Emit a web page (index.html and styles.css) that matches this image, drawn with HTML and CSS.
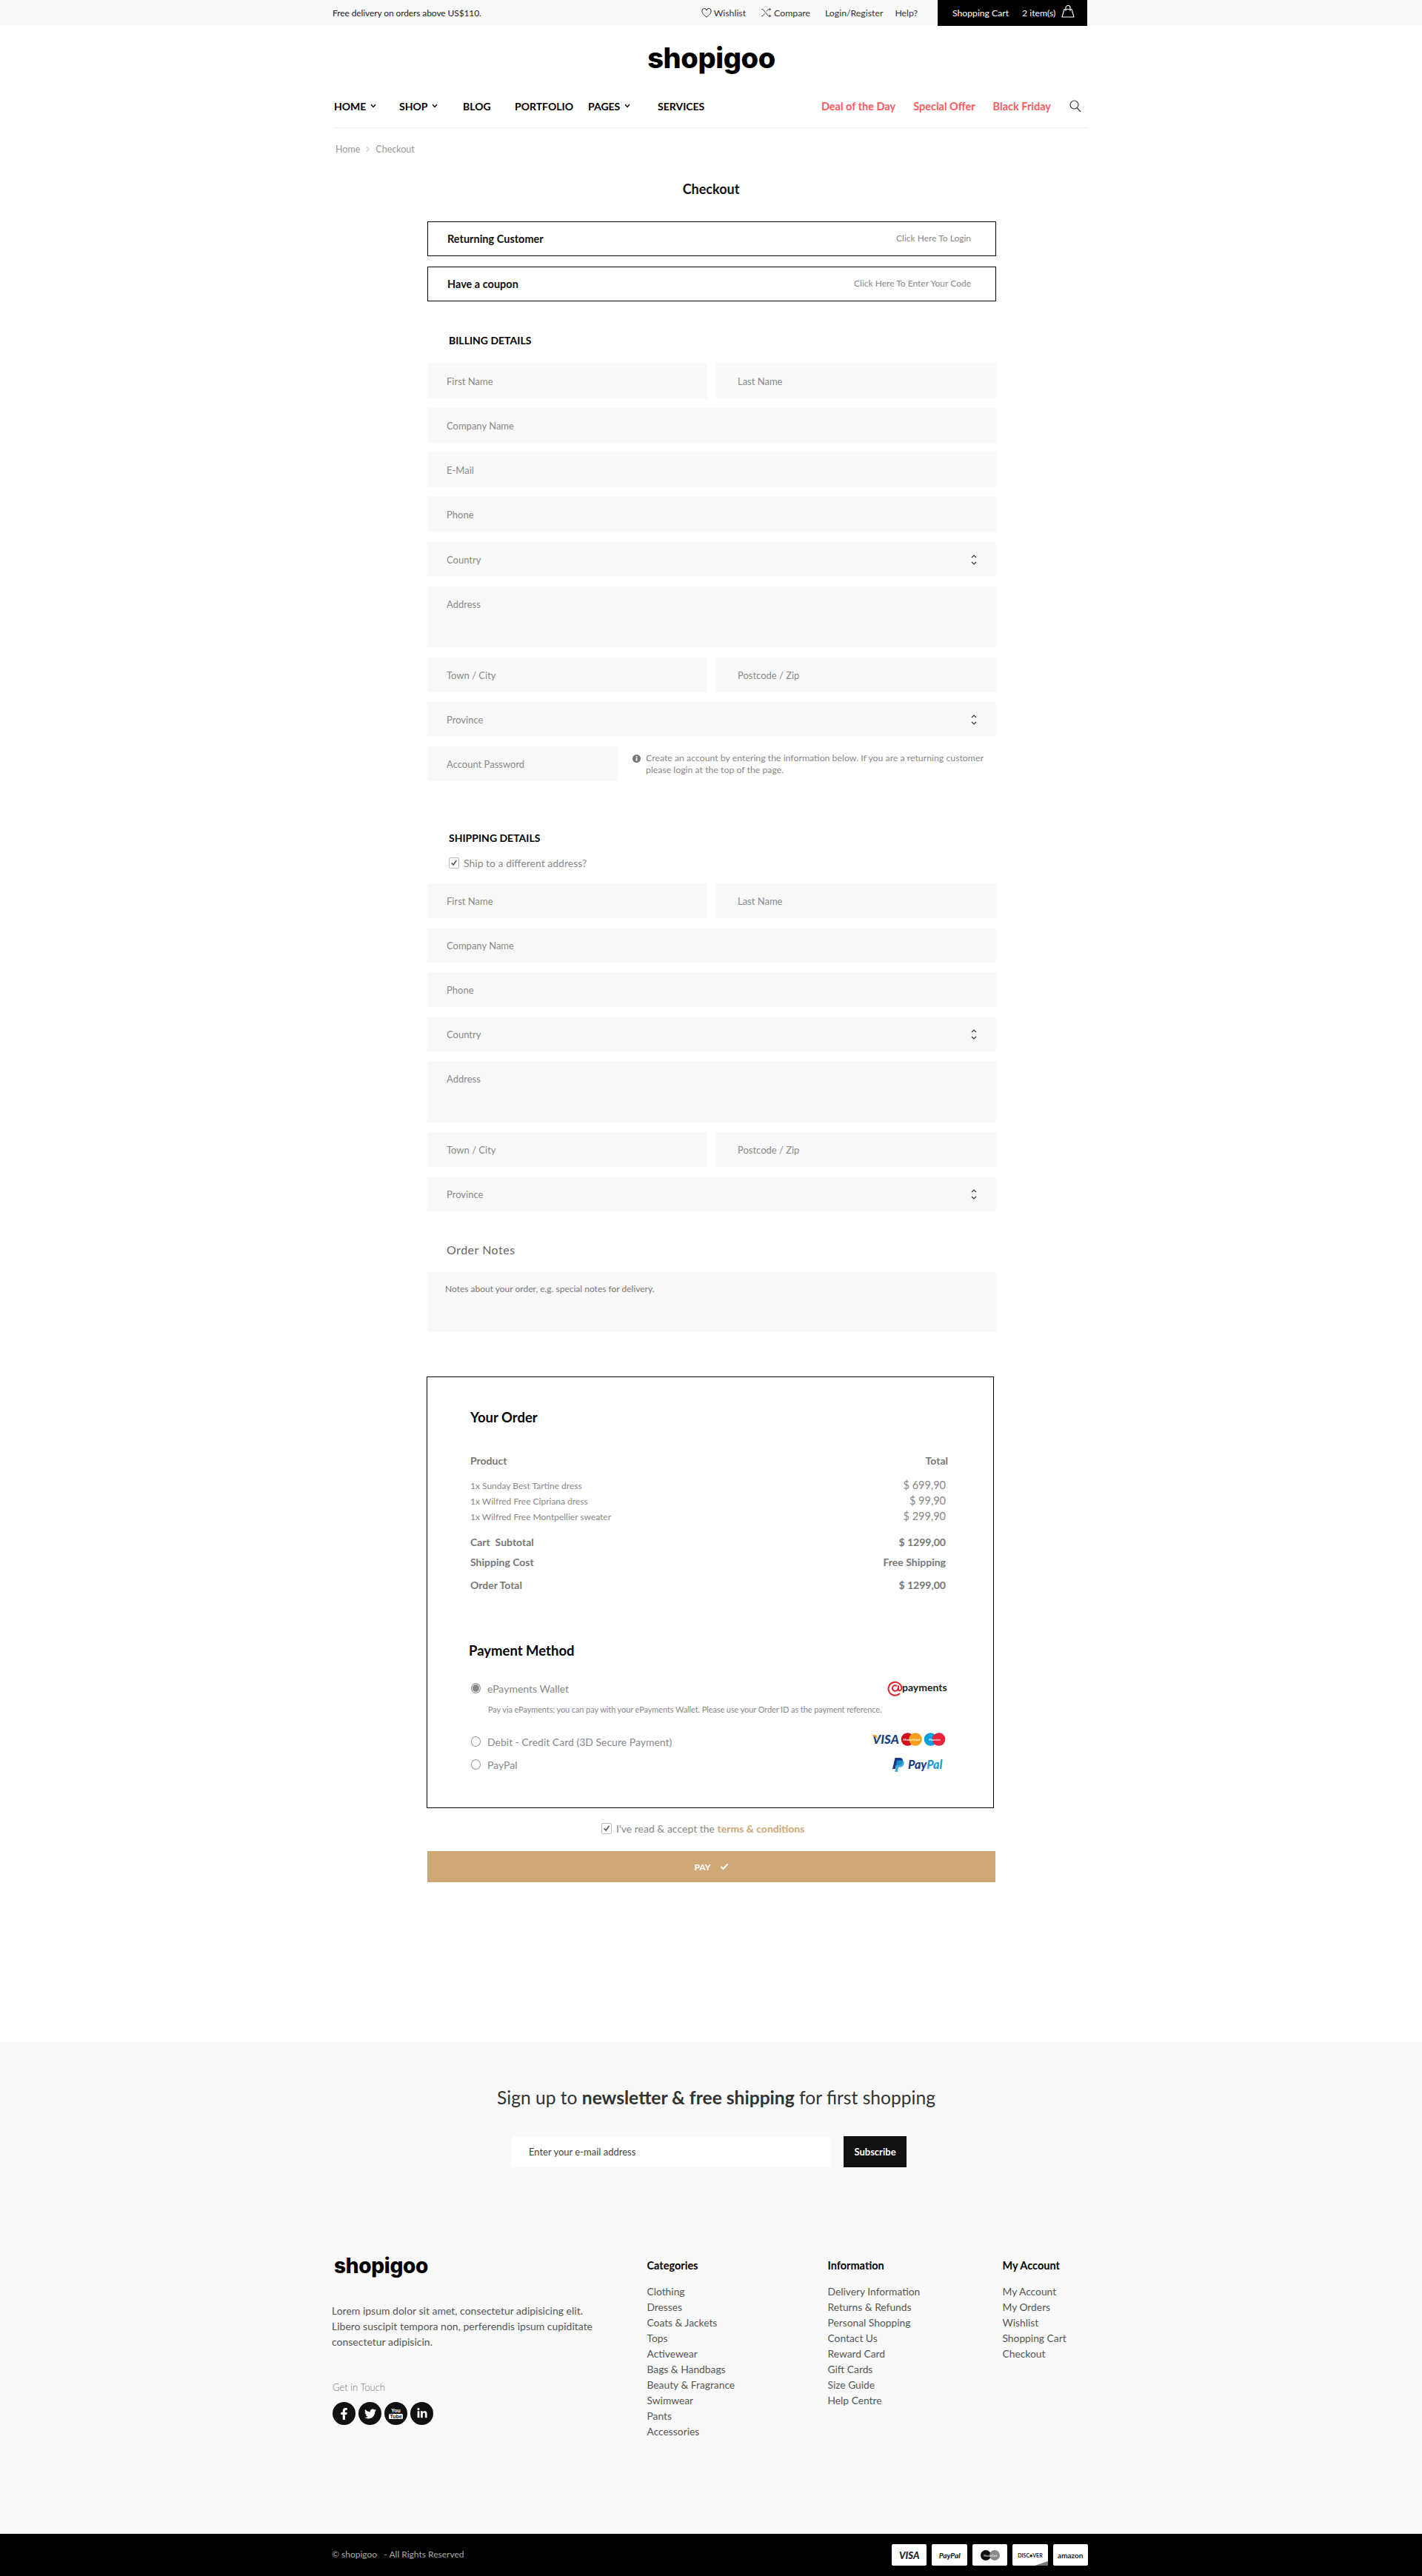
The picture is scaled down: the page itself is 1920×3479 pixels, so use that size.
FILE: index.html
```html
<!DOCTYPE html>
<html lang="en">
<head>
<meta charset="utf-8">
<title>Checkout - shopigoo</title>
<link rel="stylesheet" href="styles.css">
</head>
<body>
<div class="topbar">
  <div class="wrap topbar-in">
    <span class="promo">Free delivery on orders above US$110.</span>
    <div class="top-links">
      <a class="top-link"><svg class="ic-heart" viewBox="0 0 16 15"><path d="M8 14C3 10 1 7.500 1 4.800A3.500 3.500 0 0 1 8 3.500 3.500 3.500 0 0 1 15 4.800C15 7.500 13 10 8 14z"/></svg>Wishlist</a>
      <a class="top-link"><svg class="ic-shuffle" viewBox="0 0 18 16"><path d="M1 2h2.500l9 11H16M1 13h2.500l3-4M9.500 5.500 12.500 2H16M14 0l2.500 2L14 4M14 11l2.500 2-2.500 2"/></svg>Compare</a>
      <a class="top-link">Login/Register</a>
      <a class="top-link help">Help?</a>
    </div>
    <div class="cart">
      <span>Shopping Cart</span>
      <span>2 item(s)</span>
      <svg class="ic-bag" viewBox="0 0 18 17"><path d="M4 5.500h10l3 10.500H1zM6 8V3.500a3 3 0 0 1 6 0V8"/></svg>
    </div>
  </div>
</div>

<header class="wrap">
  <div class="logo-row"><span class="logo">shopigoo</span></div>
  <nav class="nav">
    <div class="nav-main">
      <a>HOME<svg class="ic-chev" viewBox="0 0 8 6"><path d="M1 1l3 3.500L7 1"/></svg></a>
      <a>SHOP<svg class="ic-chev" viewBox="0 0 8 6"><path d="M1 1l3 3.500L7 1"/></svg></a>
      <a>BLOG</a>
      <a>PORTFOLIO</a>
      <a>PAGES<svg class="ic-chev" viewBox="0 0 8 6"><path d="M1 1l3 3.500L7 1"/></svg></a>
      <a>SERVICES</a>
    </div>
    <div class="nav-promo">
      <a>Deal of the Day</a>
      <a>Special Offer</a>
      <a>Black Friday</a>
      <svg class="ic-search" viewBox="0 0 17 16"><circle cx="6.500" cy="6.500" r="5.500"/><path d="M10.500 11 15 16"/></svg>
    </div>
  </nav>
  <div class="crumbs"><span>Home</span><svg class="ic-crumb" viewBox="0 0 6 10"><path d="M1 1l4 4-4 4"/></svg><span>Checkout</span></div>
</header>

<main class="wrap">
  <h1 class="page-title">Checkout</h1>
  <div class="checkout">
    <div class="toggle"><strong>Returning Customer</strong><span>Click Here To Login</span></div>
    <div class="toggle"><strong>Have a coupon</strong><span>Click Here To Enter Your Code</span></div>

    <h2 class="section-title billing-title">BILLING DETAILS</h2>
    <div class="stack">
      <div class="row"><div class="field">First Name</div><div class="field">Last Name</div></div>
      <div class="field">Company Name</div>
      <div class="field">E-Mail</div>
      <div class="field">Phone</div>
      <div class="field select shift">Country<svg class="ic-updown" viewBox="0 0 8 16"><path d="M1 5l3-3 3 3M1 11l3 3 3-3"/></svg></div>
      <div class="field area">Address</div>
      <div class="row"><div class="field">Town / City</div><div class="field">Postcode / Zip</div></div>
      <div class="field select">Province<svg class="ic-updown" viewBox="0 0 8 16"><path d="M1 5l3-3 3 3M1 11l3 3 3-3"/></svg></div>
      <div class="row pass-row">
        <div class="field pass">Account Password</div>
        <div class="pass-note">
          <svg class="ic-info" viewBox="0 0 12 12"><circle cx="6" cy="6" r="6"/><rect class="cut" x="5" y="5" width="2" height="4.500"/><rect class="cut" x="5" y="2.500" width="2" height="1.600"/></svg>
          <p>Create an account by entering the information below. If you are a returning customer please login at the top of the page.</p>
        </div>
      </div>
    </div>

    <h2 class="section-title shipping-title">SHIPPING DETAILS</h2>
    <label class="check-row ship-check"><span class="checkbox"><svg viewBox="0 0 12 12"><path d="M2 6.500 5 9.500 10 2.500"/></svg></span>Ship to a different address?</label>
    <div class="stack">
      <div class="row"><div class="field">First Name</div><div class="field">Last Name</div></div>
      <div class="field">Company Name</div>
      <div class="field">Phone</div>
      <div class="field select">Country<svg class="ic-updown" viewBox="0 0 8 16"><path d="M1 5l3-3 3 3M1 11l3 3 3-3"/></svg></div>
      <div class="field area">Address</div>
      <div class="row"><div class="field">Town / City</div><div class="field">Postcode / Zip</div></div>
      <div class="field select">Province<svg class="ic-updown" viewBox="0 0 8 16"><path d="M1 5l3-3 3 3M1 11l3 3 3-3"/></svg></div>
    </div>

    <h3 class="notes-title">Order Notes</h3>
    <div class="notes">Notes about your order, e.g. special notes for delivery.</div>

    <section class="order">
      <h2 class="order-title">Your Order</h2>
      <div class="line head"><span>Product</span><span>Total</span></div>
      <div class="items">
        <div class="line item"><span>1x Sunday Best Tartine dress</span><b>$ 699,90</b></div>
        <div class="line item"><span>1x Wilfred Free Cipriana dress</span><b>$ 99,90</b></div>
        <div class="line item"><span>1x Wilfred Free Montpellier sweater</span><b>$ 299,90</b></div>
      </div>
      <div class="line total subtotal"><span>Cart&nbsp; Subtotal</span><span>$ 1299,00</span></div>
      <div class="line total shipcost"><span>Shipping Cost</span><span>Free Shipping</span></div>
      <div class="line total grand"><span>Order Total</span><span>$ 1299,00</span></div>

      <h2 class="pay-title">Payment Method</h2>
      <div class="pay-option first">
        <span class="radio on"></span><span class="pay-label">ePayments Wallet</span>
        <svg class="logo-ep" viewBox="0 0 78 22"><path d="M16 18A9 9 0 1 1 18.500 11c0 3-3 4-4.500 2.500V7.500M13.500 11a3.800 3.800 0 1 1-1.500-3" fill="none" stroke="#e0232e" stroke-width="2"/><text x="19" y="15" class="ep-text">payments</text></svg>
      </div>
      <p class="pay-desc">Pay via ePayments; you can pay with your ePayments Wallet. Please use your Order ID as the payment reference.</p>
      <div class="pay-option debit">
        <span class="radio"></span><span class="pay-label">Debit - Credit Card (3D Secure Payment)</span>
        <svg class="logo-cards" viewBox="0 0 100 18"><text x="1" y="15" class="visa-text">VISA</text><path d="M0 3h6l2 5z" fill="#f5a623"/><circle cx="48.500" cy="9" r="8.800" fill="#d0101e"/><circle cx="59" cy="9" r="8.800" fill="#f79e1b"/><text x="53.750" y="11" class="mc-text">MasterCard</text><circle cx="79.500" cy="9" r="8.800" fill="#0a9edc"/><circle cx="90.500" cy="9" r="8.800" fill="#e8233c"/><text x="85" y="11" class="mc-text">Maestro</text></svg>
      </div>
      <div class="pay-option paypal">
        <span class="radio"></span><span class="pay-label">PayPal</span>
        <svg class="logo-pp" viewBox="0 0 72 19"><path d="M3.500 0h6c3.500 0 5 2 4.300 5-.8 3.500-3.300 5-6.300 5H5L3.800 15H0z" fill="#1a3a8a"/><path d="M6 3.500h6c3 0 4.200 1.700 3.600 4.500-.8 3.200-3 4.700-5.800 4.700H8L7 19H3.400z" fill="#1d9ad6" opacity=".85"/><text x="21" y="15" class="pp-text">Pay<tspan class="pp-light">Pal</tspan></text></svg>
      </div>
    </section>

    <label class="check-row accept"><span class="checkbox"><svg viewBox="0 0 12 12"><path d="M2 6.500 5 9.500 10 2.500"/></svg></span>I've read &amp; accept the&nbsp;<a class="terms">terms &amp; conditions</a></label>
    <button class="pay-btn">PAY<svg class="ic-paycheck" viewBox="0 0 12 10"><path d="M1.500 5 4.500 8 10.500 1.500"/></svg></button>
  </div>
</main>

<footer class="footer">
  <div class="wrap">
    <h2 class="news-title">Sign up to <b>newsletter &amp; free shipping</b> for first shopping</h2>
    <div class="news-form">
      <div class="news-input">Enter your e-mail address</div>
      <button class="news-btn">Subscribe</button>
    </div>
    <div class="foot-grid">
      <div class="foot-about">
        <div class="logo logo-small">shopigoo</div>
        <p class="about-text">Lorem ipsum dolor sit amet, consectetur adipisicing elit. Libero suscipit tempora non, perferendis ipsum cupiditate consectetur adipisicin.</p>
        <div class="touch">Get in Touch</div>
        <div class="socials">
          <a class="social"><svg class="s-fb" viewBox="0 0 320 512"><path d="M279.140 288l14.220-92.660h-88.910v-60.130c0-25.350 12.420-50.060 52.240-50.060h40.420V6.260S260.430 0 225.360 0c-73.220 0-121.080 44.380-121.080 124.720v70.620H22.890V288h81.390v224h100.170V288z"/></svg></a>
          <a class="social"><svg class="s-tw" viewBox="0 0 512 512"><path d="M459.370 151.716c.325 4.548.325 9.097.325 13.645 0 138.720-105.583 298.558-298.558 298.558-59.452 0-114.680-17.219-161.137-47.106 8.447.974 16.568 1.299 25.340 1.299 49.055 0 94.213-16.568 130.274-44.832-46.132-.975-84.792-31.188-98.112-72.772 6.498.974 12.995 1.624 19.818 1.624 9.421 0 18.843-1.300 27.614-3.573-48.081-9.747-84.143-51.980-84.143-102.985v-1.299c13.969 7.797 30.214 12.670 47.431 13.319-28.264-18.843-46.781-51.005-46.781-87.391 0-19.492 5.197-37.360 14.294-52.954 51.655 63.675 129.300 105.258 216.365 109.807-1.624-7.797-2.599-15.918-2.599-24.040 0-57.828 46.782-104.934 104.934-104.934 30.213 0 57.502 12.670 76.670 33.137 23.715-4.548 46.456-13.320 66.599-25.340-7.798 24.366-24.366 44.833-46.132 57.827 21.117-2.273 41.584-8.122 60.426-16.243-14.292 20.791-32.161 39.308-52.628 54.253z"/></svg></a>
          <a class="social yt"><span class="yt-you">You</span><span class="yt-tube">Tube</span></a>
          <a class="social"><svg class="s-in" viewBox="0 0 448 512"><path d="M100.280 448H7.400V148.900h92.880zM53.790 108.100C24.090 108.100 0 83.500 0 53.800a53.790 53.790 0 0 1 107.580 0c0 29.700-24.100 54.300-53.790 54.300zM447.900 448h-92.680V302.400c0-34.700-.7-79.200-48.290-79.200-48.290 0-55.690 37.700-55.690 76.700V448h-92.780V148.900h89.080v40.800h1.300c12.400-23.500 42.690-48.300 87.880-48.300 94 0 111.280 61.900 111.280 142.300V448z"/></svg></a>
        </div>
      </div>
      <div class="foot-col">
        <h4>Categories</h4>
        <a>Clothing</a><a>Dresses</a><a>Coats &amp; Jackets</a><a>Tops</a><a>Activewear</a><a>Bags &amp; Handbags</a><a>Beauty &amp; Fragrance</a><a>Swimwear</a><a>Pants</a><a>Accessories</a>
      </div>
      <div class="foot-col">
        <h4>Information</h4>
        <a>Delivery Information</a><a>Returns &amp; Refunds</a><a>Personal Shopping</a><a>Contact Us</a><a>Reward Card</a><a>Gift Cards</a><a>Size Guide</a><a>Help Centre</a>
      </div>
      <div class="foot-col">
        <h4>My Account</h4>
        <a>My Account</a><a>My Orders</a><a>Wishlist</a><a>Shopping Cart</a><a>Checkout</a>
      </div>
    </div>
  </div>
</footer>

<div class="bottom">
  <div class="wrap bottom-in">
    <span class="copy">© shopigoo &nbsp; - All Rights Reserved</span>
    <div class="cards">
      <div class="card"><span class="c-visa">VISA</span></div>
      <div class="card"><span class="c-pp">PayPal</span></div>
      <div class="card"><svg class="c-mc" viewBox="0 0 26 14"><circle cx="7" cy="7" r="7" fill="#111"/><circle cx="19" cy="7" r="7" fill="#8a8a8a"/><text x="13" y="8.500" class="c-mc-text">MasterCard</text></svg></div>
      <div class="card discover"><span class="c-disc">DISC&#9679;VER</span></div>
      <div class="card"><span class="c-amz">amazon</span></div>
    </div>
  </div>
</div>
</body>
</html>
```

FILE: styles.css
```css
* { box-sizing: border-box; }
html, body { margin: 0; padding: 0; }
body {
  font-family: Lato, "Noto Sans", sans-serif;
  font-size: 13px;
  color: #888;
  background: #fff;
}
a { color: inherit; text-decoration: none; }
h1, h2, h3, h4, p { margin: 0; }
svg { display: block; flex: none; }
.wrap { width: 1020px; margin-left: 450px; }

/* top bar */
.topbar { background: #f9f9f9; height: 35px; }
.topbar-in { display: flex; align-items: center; height: 35px; color: #222; font-size: 12px; }
.promo { margin-left: -1px; letter-spacing: -.1px; }
.top-links { display: flex; align-items: center; margin-left: auto; gap: 20px; color: #333; font-size: 12.300px; }
.top-link { display: flex; align-items: center; gap: 3px; }
.help { margin-left: -4px; }
.ic-heart { width: 14px; height: 13px; fill: none; stroke: #222; stroke-width: 1.1; }
.ic-shuffle { width: 15px; height: 13px; fill: none; stroke: #222; stroke-width: 1; }
.cart { display: flex; align-items: center; width: 202px; height: 35px; margin-left: 27px; margin-right: 2px; padding-left: 20px; gap: 18px; background: #000; color: #fff; font-size: 12.200px; }
.ic-bag { width: 18px; height: 17px; margin-left: -10px; margin-top: -5px; fill: none; stroke: #fff; stroke-width: 1.1; stroke-linejoin: round; }

/* header */
.logo-row { display: flex; justify-content: center; align-items: center; height: 86px; padding-left: 1px; }
.logo { font-family: Inter, "Open Sans", sans-serif; font-weight: 800; font-size: 38px; line-height: 40px; color: #000; letter-spacing: -.4px; }
.nav { display: flex; align-items: center; justify-content: space-between; padding-bottom: 7px; border-bottom: 1px solid #eee; font-size: 14px; box-sizing: content-box; height: 44px; }
.nav-main { display: grid; grid-template-columns: 88px 86px 70px 99px 94px auto; padding-left: 1px; color: #000; font-weight: 700; }
.nav-main a { display: flex; align-items: center; gap: 6px; }
.ic-chev { width: 8px; height: 6px; fill: none; stroke: #000; stroke-width: 1.2; }
.nav-promo { display: flex; align-items: center; gap: 24px; padding-right: 9px; color: #ff5a5f; font-weight: 700; font-size: 14.500px; }
.ic-search { width: 17px; height: 16px; margin-left: 1px; fill: none; stroke: #333; stroke-width: 1.200; }
.crumbs { display: flex; align-items: center; height: 56px; padding-left: 3px; gap: 8px; color: #999; font-size: 12.500px; }
.ic-crumb { width: 5px; height: 9px; fill: none; stroke: #999; stroke-width: 1; }

/* main */
.page-title { height: 24px; margin-top: 14px; text-align: center; font-size: 18px; line-height: 24px; font-weight: 700; color: #111; }
.checkout { width: 768px; margin-left: 127px; padding-top: 32px; padding-bottom: 215px; }
.toggle { display: flex; align-items: center; justify-content: space-between; height: 47px; margin-bottom: 14px; padding: 0 33px 0 26px; border: 1px solid #000; font-size: 12px; color: #888; }
.toggle strong { color: #111; font-size: 14.500px; font-weight: 700; }
.toggle span { margin-top: -3px; }
.section-title { height: 20px; padding-left: 29px; font-size: 14px; line-height: 20px; font-weight: 700; color: #000; }
.billing-title { margin-top: 43px; margin-bottom: 21px; }
.shipping-title { margin-top: 67px; margin-bottom: 13px; }
.stack { display: flex; flex-direction: column; gap: 13px; }
.row { display: flex; gap: 12px; }
.row .field { flex: 1 1 50%; }
.row .field + .field { padding-left: 29px; }
.field { display: flex; align-items: center; justify-content: space-between; height: 47px; padding: 0 26px; background: #f9f9f9; font-size: 13px; color: #888; }
.shift { margin-top: 1px; }
.ic-updown { width: 8px; height: 16px; fill: none; stroke: #333; stroke-width: 1.2; }
.area { align-items: flex-start; height: 83px; padding-top: 16px; }
.pass-row { gap: 20px; }
.row .pass { flex: none; width: 257px; }
.pass-note { display: flex; flex: 1; gap: 7px; padding-top: 8px; font-size: 12.300px; line-height: 16px; color: #888; }
.ic-info { width: 11px; height: 11px; margin-top: 3px; fill: #777; }
.ic-info .cut { fill: #fff; }
.check-row { display: flex; align-items: center; font-size: 14px; color: #888; }
.ship-check { height: 20px; margin-bottom: 18px; padding-left: 29px; gap: 6px; }
.checkbox { display: flex; align-items: center; justify-content: center; width: 14px; height: 15px; border: 1px solid #bbb; border-radius: 2px; background: #fff; }
.checkbox svg { width: 10px; height: 10px; fill: none; stroke: #555; stroke-width: 2; }
.notes-title { height: 20px; margin-top: 42px; margin-bottom: 19px; padding-left: 26px; font-size: 16px; line-height: 20px; font-weight: 400; color: #666; letter-spacing: .5px; }
.notes { height: 82px; padding: 16px 24px; background: #f9f9f9; font-size: 12px; line-height: 16px; color: #777; }

/* order box */
.order { width: 766px; height: 583px; margin-top: 60px; margin-left: -1px; padding: 42px 61px 0 58px; border: 1px solid #000; }
.order-title { height: 24px; font-size: 18.500px; line-height: 24px; font-weight: 700; color: #000; }
.line { display: flex; justify-content: space-between; }
.head { height: 20px; margin-top: 37px; font-size: 14px; line-height: 20px; font-weight: 700; color: #777; }
.items { margin-top: 13px; }
.item { height: 21px; align-items: center; font-size: 12px; color: #888; padding-right: 3px; }
.item b { font-size: 14.500px; font-weight: 400; margin-top: -2px; }
.total { height: 20px; padding-right: 3px; font-size: 14px; line-height: 20px; font-weight: 700; color: #777; }
.subtotal { margin-top: 14px; }
.shipcost { margin-top: 7px; }
.grand { margin-top: 11px; }
.pay-title { height: 24px; margin-top: 66px; margin-left: -2px; font-size: 18.500px; line-height: 24px; font-weight: 700; color: #000; }
.pay-option { display: flex; align-items: center; height: 20px; padding-left: 1px; padding-right: 3px; font-size: 14px; color: #888; }
.pay-label { margin-left: 9px; margin-right: auto; }
.first { margin-top: 29px; }
.debit { margin-top: 25px; }
.paypal { margin-top: 11px; }
.radio { width: 13px; height: 14px; border: 1px solid #999; border-radius: 50%; background: #fff; }
.radio.on { background: #888; box-shadow: inset 0 0 0 1px #fff; }
.pay-desc { height: 16px; margin-top: 11px; margin-left: 24px; font-size: 11px; line-height: 16px; letter-spacing: -.1px; color: #888; white-space: nowrap; }
.logo-ep { width: 78px; height: 22px; overflow: visible; }
.ep-text { font-family: Lato, sans-serif; font-size: 14px; font-weight: 700; fill: #222; }
.logo-cards { width: 100px; height: 18px; overflow: visible; margin-top: -6px; }
.visa-text { font-family: Lato, sans-serif; font-size: 17px; font-weight: 900; font-style: italic; fill: #1a3f7a; }
.mc-text { font-family: Lato, sans-serif; font-size: 4.500px; font-weight: 700; font-style: italic; fill: #fff; text-anchor: middle; }
.logo-pp { width: 72px; height: 19px; overflow: visible; }
.pp-text { font-family: Lato, sans-serif; font-size: 16px; font-weight: 900; font-style: italic; fill: #1a3a8a; }
.pp-light { fill: #1d9ad6; }
.accept { height: 16px; margin-top: 19px; margin-left: 235px; gap: 0; white-space: nowrap; }
.accept .checkbox { margin-right: 6px; }
.terms { font-weight: 700; color: #cfa777; }
.pay-btn { display: flex; align-items: center; justify-content: center; gap: 12px; width: 767px; height: 42px; margin-top: 23px; border: 0; background: #cfa878; color: #fff; font-family: inherit; font-size: 12px; font-weight: 700; }
.ic-paycheck { width: 12px; height: 10px; fill: none; stroke: #fff; stroke-width: 2; }

/* footer */
.footer { background: #f9f9f9; padding-top: 60px; padding-bottom: 128px; }
.news-title { height: 32px; padding-left: 14px; text-align: center; font-size: 24.600px; line-height: 32px; font-weight: 400; color: #333; }
.news-title b { font-weight: 700; }
.news-form { display: flex; gap: 18px; margin-top: 36px; margin-left: 240px; }
.news-input { display: flex; align-items: center; width: 431px; height: 42px; padding-left: 24px; background: #fff; font-size: 13px; color: #444; }
.news-btn { width: 85px; height: 42px; border: 0; background: #111; color: #fff; font-family: inherit; font-size: 13px; font-weight: 700; }
.foot-grid { display: grid; grid-template-columns: 424px 244px 236px 1fr; margin-top: 123px; }
.logo-small { height: 20px; font-size: 28px; line-height: 20px; letter-spacing: -.3px; padding-left: 1px; }
.about-text { width: 370px; margin-top: 40px; margin-left: -2px; font-size: 14px; line-height: 21px; color: #555; }
.touch { height: 20px; margin-top: 41px; margin-left: -1px; font-size: 13px; line-height: 20px; font-weight: 300; color: #777; }
.socials { display: flex; gap: 4px; margin-top: 10px; margin-left: -1px; }
.social { display: flex; align-items: center; justify-content: center; width: 31px; height: 31px; border-radius: 50%; background: #111; }
.social svg { fill: #fff; }
.s-fb { width: 11px; height: 16px; }
.s-tw { width: 16px; height: 16px; }
.s-in { width: 14px; height: 15px; }
.yt { flex-direction: column; color: #fff; font-family: "Liberation Sans", sans-serif; font-size: 7px; line-height: 7px; font-weight: 700; }
.yt-tube { background: #fff; color: #111; border-radius: 1.500px; padding: 0 1px; margin-top: 1px; }
.foot-col { display: flex; flex-direction: column; }
.foot-col h4 { height: 20px; margin-bottom: 14px; margin-left: -.5px; font-size: 14.500px; line-height: 20px; font-weight: 700; color: #000; }
.foot-col a { height: 21px; margin-left: -.5px; font-size: 13.800px; line-height: 21px; color: #555; }

/* bottom */
.bottom { background: #000; height: 57px; }
.bottom-in { display: flex; align-items: center; justify-content: space-between; height: 57px; padding-bottom: 2px; }
.copy { margin-left: -2px; font-size: 12px; color: #aaa; }
.cards { display: flex; gap: 7px; margin-top: 2px; margin-right: 1px; }
.card { position: relative; display: flex; align-items: center; justify-content: center; width: 47.400px; height: 29px; background: #fff; border-radius: 2px; color: #222; overflow: hidden; }
.c-visa { font-size: 13px; font-weight: 900; font-style: italic; }
.c-pp { font-size: 10px; font-weight: 900; font-style: italic; }
.c-mc { width: 26px; height: 14px; }
.c-mc-text { font-family: Lato, sans-serif; font-size: 3.500px; fill: #fff; text-anchor: middle; }
.c-disc { font-size: 7px; font-weight: 700; }
.discover::after { content: ""; position: absolute; right: 0; bottom: 0; border-style: solid; border-width: 0 0 6px 18px; border-color: transparent transparent #777 transparent; }
.c-amz { font-size: 10px; font-weight: 700; }
```
